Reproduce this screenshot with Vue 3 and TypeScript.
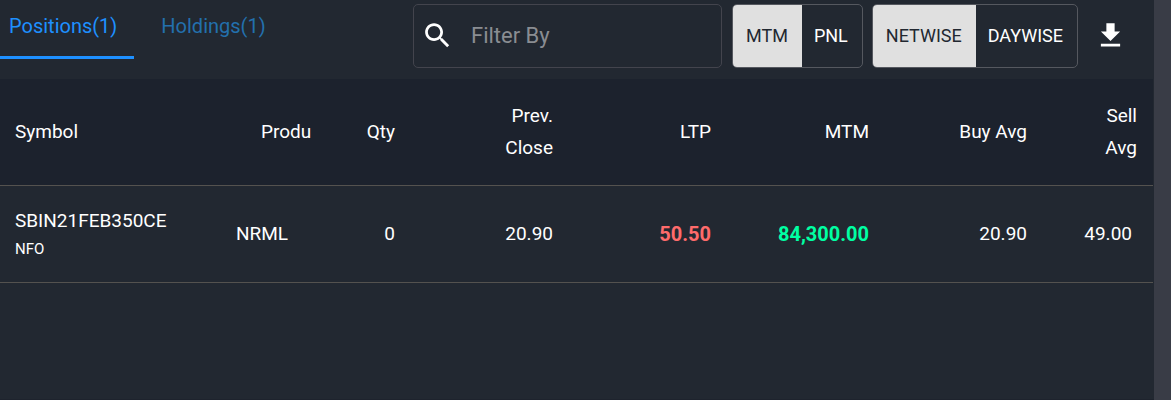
<script setup lang="ts">
import { ref } from 'vue'

interface Position {
  symbol: string
  exchange: string
  product: string
  qty: number
  prevClose: string
  ltp: string
  mtm: string
  buyAvg: string
  sellAvg: string
}

const tabs = ['Positions(1)', 'Holdings(1)']
const activeTab = ref(tabs[0])
const filter = ref('')
const toggles = ref([
  { name: 'Value', options: ['MTM', 'PNL'], selected: 'MTM' },
  { name: 'Grouping', options: ['NETWISE', 'DAYWISE'], selected: 'NETWISE' },
])
const positions: Position[] = [
  {
    symbol: 'SBIN21FEB350CE',
    exchange: 'NFO',
    product: 'NRML',
    qty: 0,
    prevClose: '20.90',
    ltp: '50.50',
    mtm: '84,300.00',
    buyAvg: '20.90',
    sellAvg: '49.00',
  },
]
</script>

<template>
  <div class="page">
    <main class="panel">
      <header class="toolbar">
        <div class="tabs" role="tablist">
          <button
            v-for="tab in tabs"
            :key="tab"
            type="button"
            role="tab"
            class="tab"
            :class="{ active: tab === activeTab }"
            :aria-selected="tab === activeTab"
            @click="activeTab = tab"
          >
            {{ tab }}
          </button>
        </div>
        <label class="search">
          <svg class="icon" viewBox="0 0 24 24" aria-hidden="true">
            <path d="M15.5 14h-.79l-.28-.27C15.41 12.59 16 11.11 16 9.5 16 5.91 13.09 3 9.5 3S3 5.91 3 9.5 5.91 16 9.5 16c1.61 0 3.09-.59 4.23-1.57l.27.28v.79l5 4.99L20.49 19l-4.99-5zm-6 0C7.01 14 5 11.99 5 9.5S7.01 5 9.5 5 14 7.01 14 9.5 11.99 14 9.5 14z" />
          </svg>
          <input v-model="filter" type="text" placeholder="Filter By" aria-label="Filter By" />
        </label>
        <div v-for="group in toggles" :key="group.name" class="toggle" role="group" :aria-label="group.name">
          <button
            v-for="option in group.options"
            :key="option"
            type="button"
            :class="{ selected: option === group.selected }"
            :aria-pressed="option === group.selected"
            @click="group.selected = option"
          >
            {{ option }}
          </button>
        </div>
        <button class="download" type="button" aria-label="Download">
          <svg class="icon" viewBox="0 0 24 24" aria-hidden="true">
            <path d="M19 9h-4V3H9v6H5l7 7 7-7zM5 18v2h14v-2H5z" />
          </svg>
        </button>
      </header>

      <table class="grid">
        <colgroup>
          <col class="c-symbol" />
          <col class="c-product" />
          <col class="c-qty" />
          <col class="c-value" span="4" />
          <col class="c-sell" />
        </colgroup>
        <thead>
          <tr>
            <th scope="col" class="left">Symbol</th>
            <th scope="col" class="left"><span class="clip">Product</span></th>
            <th scope="col">Qty</th>
            <th scope="col">Prev.<br />Close</th>
            <th scope="col">LTP</th>
            <th scope="col">MTM</th>
            <th scope="col">Buy Avg</th>
            <th scope="col">Sell<br />Avg</th>
          </tr>
        </thead>
        <tbody>
          <tr v-for="row in positions" :key="row.symbol">
            <td class="left">
              <div class="symbol">{{ row.symbol }}</div>
              <div class="exchange">{{ row.exchange }}</div>
            </td>
            <td class="left">{{ row.product }}</td>
            <td>{{ row.qty }}</td>
            <td>{{ row.prevClose }}</td>
            <td class="down">{{ row.ltp }}</td>
            <td class="up">{{ row.mtm }}</td>
            <td>{{ row.buyAvg }}</td>
            <td class="last">{{ row.sellAvg }}</td>
          </tr>
        </tbody>
      </table>
    </main>
  </div>
</template>

<style>
body {
  background: #222831;
}
</style>

<style scoped>
.page {
  box-sizing: border-box;
  min-height: 100vh;
  padding-right: 17px;
  background: #393c46;
  color: #fff;
  font-family: Roboto, "Liberation Sans", sans-serif;
  font-size: 19px;
}
.panel {
  box-sizing: border-box;
  min-height: 100vh;
  padding-right: 1px;
  border-bottom: 1px solid #1e232d;
  background: #222831;
}
button,
input {
  font: inherit;
  color: inherit;
  background: none;
  border: 0;
  margin: 0;
  padding: 0;
}
button {
  cursor: pointer;
}
.toolbar {
  display: flex;
  align-items: flex-start;
  padding: 4px 26px 11px 0;
}
.tabs {
  display: flex;
  flex: 1;
  margin-top: -4px;
}
.tab {
  height: 59px;
  padding: 0 17px 3px 27px;
  border-bottom: 3px solid transparent;
  color: #2370ad;
  font-size: 20px;
  line-height: 53px;
}
.tab:first-child {
  padding-left: 9px;
}
.tab.active {
  color: #1e90ff;
  border-bottom-color: #1e90ff;
}
.icon {
  display: block;
  flex: none;
  width: 33px;
  height: 33px;
  fill: #fff;
}
.search {
  box-sizing: border-box;
  display: flex;
  align-items: center;
  gap: 17px;
  width: 309px;
  height: 64px;
  margin-right: 10px;
  padding: 0 7px 1px;
  border: 1px solid #43444d;
  border-radius: 5px;
}
.search input {
  flex: 1;
  min-width: 0;
  font-size: 22px;
  outline: none;
}
.search input::placeholder {
  color: #8a8d92;
  opacity: 1;
}
.toggle {
  box-sizing: border-box;
  display: flex;
  height: 64px;
  margin-right: 9px;
  border: 1px solid #55585f;
  border-radius: 5px;
  overflow: hidden;
}
.toggle button {
  padding: 0 14px 2px 12px;
  font-size: 18px;
}
.toggle .selected {
  margin: -1px 0 -1px -1px;
  padding: 0 14px 2px;
  background: #e0e0e0;
  color: #222831;
}
.download {
  margin: 15px 0 0 7px;
}
.grid {
  width: 100%;
  table-layout: fixed;
  border-collapse: collapse;
}
.c-symbol {
  width: 220px;
}
.c-product {
  width: 107px;
}
.c-qty {
  width: 84px;
}
.c-value {
  width: 158px;
}
.c-sell {
  width: 110px;
}
.grid th,
.grid td {
  padding: 0 16px;
  border-bottom: 1px solid #54524f;
  font-weight: 400;
  line-height: 32px;
  text-align: right;
}
.grid th {
  height: 106px;
  background: #1c222d;
}
.grid td {
  height: 96px;
}
.grid .left {
  text-align: left;
}
.grid .left:first-child {
  padding-left: 15px;
}
.clip {
  display: block;
  padding-left: 25px;
  overflow: hidden;
  white-space: nowrap;
}
.symbol {
  line-height: 31px;
}
.exchange {
  font-size: 15px;
  line-height: 27px;
}
.grid .down,
.grid .up {
  font-size: 20px;
  font-weight: 700;
}
.grid .down {
  color: #ff6b6b;
}
.grid .up {
  color: #00ffa3;
}
.grid .last {
  padding-right: 21px;
}
</style>
